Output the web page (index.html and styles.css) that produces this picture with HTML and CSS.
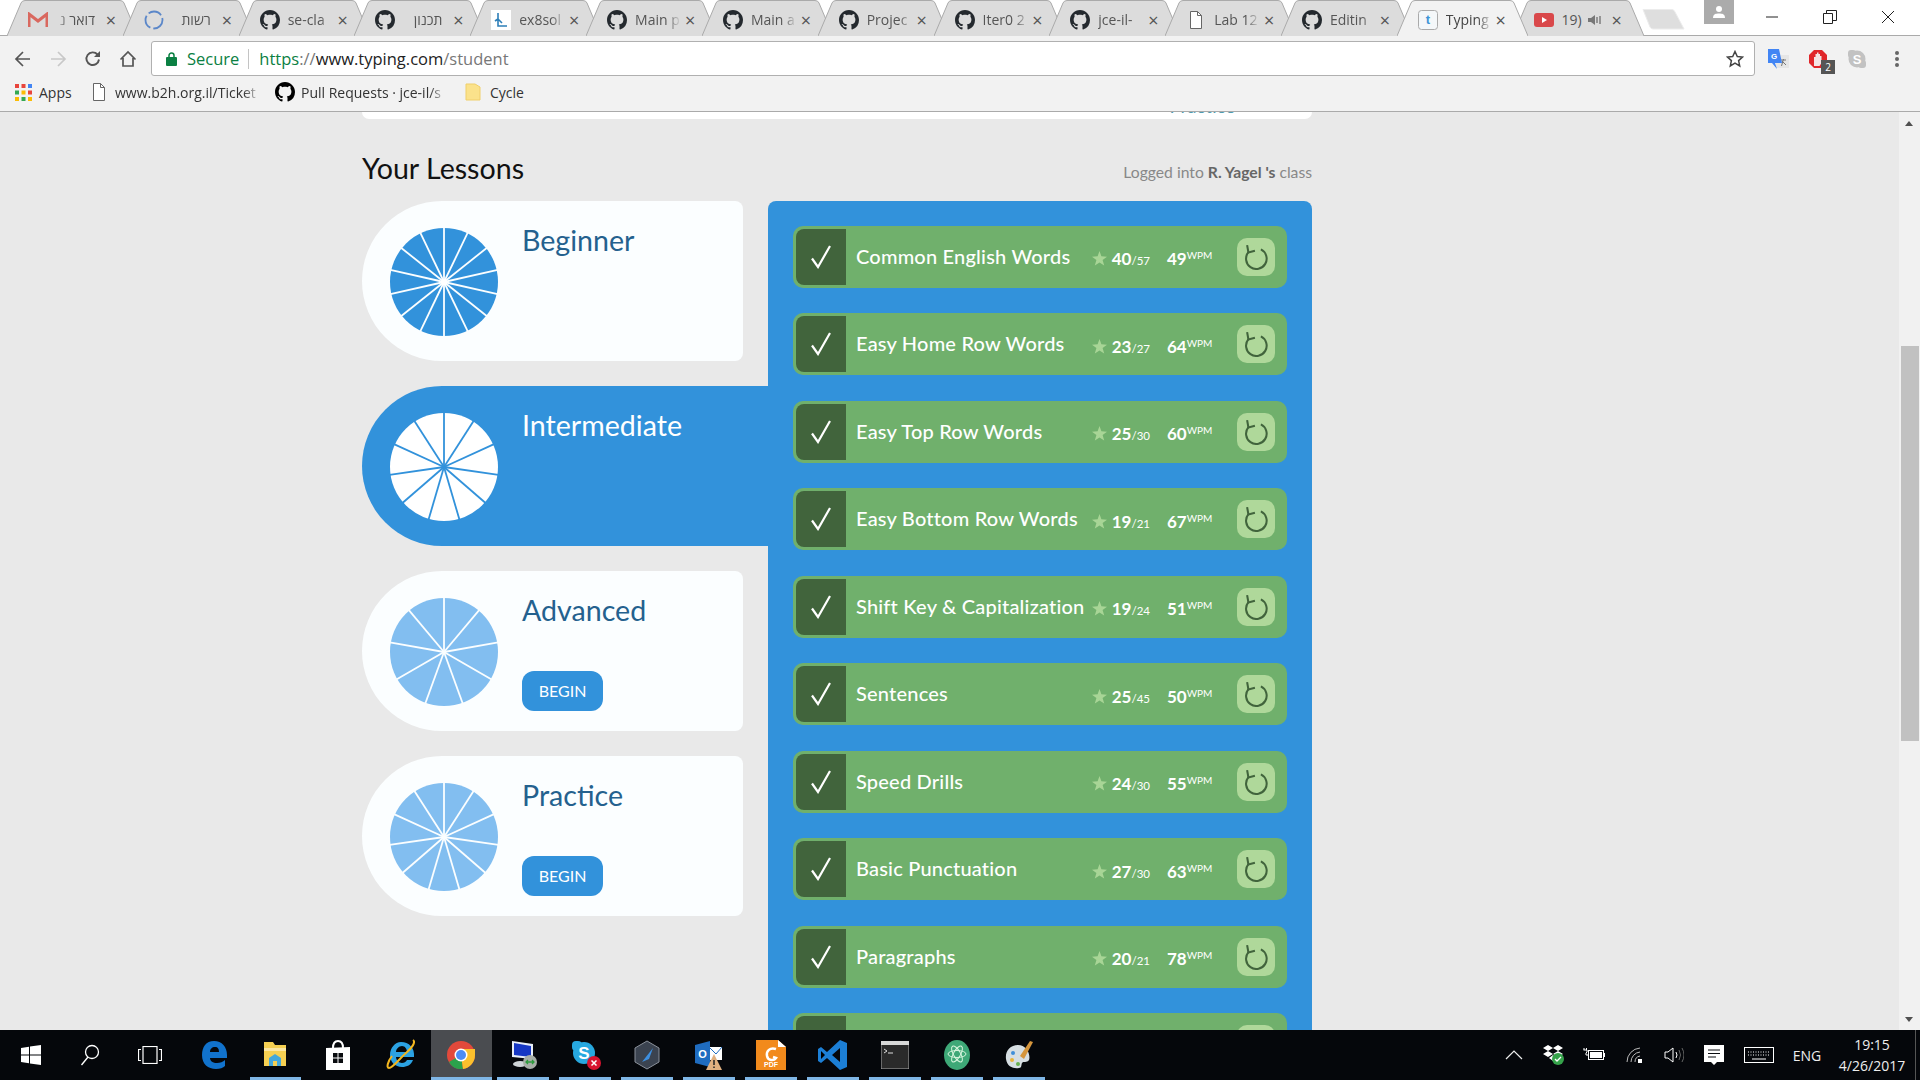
FILE: index.html
```html
<!DOCTYPE html>
<html lang="en">
<head>
<meta charset="utf-8">
<title>Typing.com</title>
<link rel="stylesheet" href="styles.css">
</head>
<body>
<svg class="defs" width="0" height="0" aria-hidden="true">
  <defs>
    <path id="gh" d="M8 0C3.58 0 0 3.58 0 8c0 3.54 2.29 6.53 5.47 7.59.4.07.55-.17.55-.38 0-.19-.01-.82-.01-1.49-2.01.37-2.53-.49-2.69-.94-.09-.23-.48-.94-.82-1.13-.28-.15-.68-.52-.01-.53.63-.01 1.08.58 1.23.82.72 1.21 1.87.87 2.33.66.07-.52.28-.87.51-1.07-1.78-.2-3.64-.89-3.64-3.95 0-.87.31-1.59.82-2.15-.08-.2-.36-1.02.08-2.12 0 0 .67-.21 2.2.82.64-.18 1.32-.27 2-.27s1.36.09 2 .27c1.53-1.04 2.2-.82 2.2-.82.44 1.1.16 1.92.08 2.12.51.56.82 1.27.82 2.15 0 3.07-1.87 3.75-3.65 3.95.29.25.54.73.54 1.48 0 1.07-.01 1.93-.01 2.2 0 .21.15.46.55.38A8.01 8.01 0 0 0 16 8c0-4.42-3.58-8-8-8z"/>
    <path id="tabshape" d="M0 36 L14 3 Q15 .5 18 .5 L113 .5 Q116 .5 117 3 L131 36"/>
    <g id="doc"><path d="M1.5.5h7l4 4v13h-11z" fill="#fff" stroke="#666"/><path d="M8.5.5v4h4" fill="none" stroke="#666"/></g>
    <g id="check"><path d="M2 13.500 L8 22 L20 1" fill="none" stroke="#fff" stroke-width="2.200"/></g>
    <g id="redo"><path d="M5 7.500A9.500 9.500 0 1 0 16.500 5" fill="none" stroke="#41643c" stroke-width="1.900"/><path d="M3.800 1 L5 7.800 L11 6.300" fill="none" stroke="#41643c" stroke-width="1.900"/></g>
    <polygon id="star" points="8,0 10,5.6 16,6 11.3,9.7 13,15.5 8,12.2 3,15.5 4.7,9.7 0,6 6,5.6" fill="#a8d596"/>
  </defs>
</svg>

<header class="chrome">
  <div class="tabstrip">
    <div class="tab">
      <svg class="tab-bg" width="131" height="36"><use href="#tabshape"/></svg>
      <svg class="fav" viewBox="0 0 20 16" width="20" height="16"><path d="M1 15V2l9 7 9-7v13" fill="none" stroke="#d9685f" stroke-width="3"/></svg>
      <span class="tab-text rtl">דואר נ</span><span class="tab-x">×</span>
    </div>
    <div class="tab">
      <svg class="tab-bg" width="131" height="36"><use href="#tabshape"/></svg>
      <svg class="fav" viewBox="0 0 20 20" width="20" height="20"><circle cx="10" cy="10" r="8.500" fill="none" stroke="#5b87c9" stroke-width="1.800" stroke-dasharray="14 3"/></svg>
      <span class="tab-text rtl">רשות</span><span class="tab-x">×</span>
    </div>
    <div class="tab">
      <svg class="tab-bg" width="131" height="36"><use href="#tabshape"/></svg>
      <svg class="fav" viewBox="0 0 16 16" width="20" height="20"><use href="#gh"/></svg>
      <span class="tab-text">se-cla</span><span class="tab-x">×</span>
    </div>
    <div class="tab">
      <svg class="tab-bg" width="131" height="36"><use href="#tabshape"/></svg>
      <svg class="fav" viewBox="0 0 16 16" width="20" height="20"><use href="#gh"/></svg>
      <span class="tab-text rtl">תכנון</span><span class="tab-x">×</span>
    </div>
    <div class="tab">
      <svg class="tab-bg" width="131" height="36"><use href="#tabshape"/></svg>
      <svg class="fav" viewBox="0 0 20 20" width="20" height="20"><rect width="20" height="20" fill="#fff"/><path d="M7 3v13h9M7 9l-3 2M7 9l4 4" fill="none" stroke="#2d7fb8" stroke-width="1.600"/></svg>
      <span class="tab-text">ex8sol</span><span class="tab-x">×</span>
    </div>
    <div class="tab">
      <svg class="tab-bg" width="131" height="36"><use href="#tabshape"/></svg>
      <svg class="fav" viewBox="0 0 16 16" width="20" height="20"><use href="#gh"/></svg>
      <span class="tab-text">Main p</span><span class="tab-x">×</span>
    </div>
    <div class="tab">
      <svg class="tab-bg" width="131" height="36"><use href="#tabshape"/></svg>
      <svg class="fav" viewBox="0 0 16 16" width="20" height="20"><use href="#gh"/></svg>
      <span class="tab-text">Main a</span><span class="tab-x">×</span>
    </div>
    <div class="tab">
      <svg class="tab-bg" width="131" height="36"><use href="#tabshape"/></svg>
      <svg class="fav" viewBox="0 0 16 16" width="20" height="20"><use href="#gh"/></svg>
      <span class="tab-text">Projec</span><span class="tab-x">×</span>
    </div>
    <div class="tab">
      <svg class="tab-bg" width="131" height="36"><use href="#tabshape"/></svg>
      <svg class="fav" viewBox="0 0 16 16" width="20" height="20"><use href="#gh"/></svg>
      <span class="tab-text">Iter0 2</span><span class="tab-x">×</span>
    </div>
    <div class="tab">
      <svg class="tab-bg" width="131" height="36"><use href="#tabshape"/></svg>
      <svg class="fav" viewBox="0 0 16 16" width="20" height="20"><use href="#gh"/></svg>
      <span class="tab-text">jce-il-</span><span class="tab-x">×</span>
    </div>
    <div class="tab">
      <svg class="tab-bg" width="131" height="36"><use href="#tabshape"/></svg>
      <svg class="fav" viewBox="-3 -1 20 20" width="20" height="20"><use href="#doc"/></svg>
      <span class="tab-text">Lab 12</span><span class="tab-x">×</span>
    </div>
    <div class="tab">
      <svg class="tab-bg" width="131" height="36"><use href="#tabshape"/></svg>
      <svg class="fav" viewBox="0 0 16 16" width="20" height="20"><use href="#gh"/></svg>
      <span class="tab-text">Editin</span><span class="tab-x">×</span>
    </div>
    <div class="tab tab-active">
      <svg class="tab-bg" width="131" height="36"><use href="#tabshape"/></svg>
      <svg class="fav" viewBox="0 0 20 20" width="20" height="20"><rect x=".5" y=".5" width="19" height="19" rx="3" fill="#f4f7f9" stroke="#aaa"/><text x="10" y="14" class="fav-t">t</text></svg>
      <span class="tab-text">Typing</span><span class="tab-x">×</span>
    </div>
    <div class="tab">
      <svg class="tab-bg" width="131" height="36"><use href="#tabshape"/></svg>
      <svg class="fav" viewBox="0 0 20 14" width="20" height="14"><rect width="20" height="14" rx="3" fill="#d9484a"/><path d="M8 4l5 3-5 3z" fill="#fff"/></svg>
      <span class="tab-text tab-text-short">19)</span>
      <svg class="speaker" viewBox="0 0 14 12" width="14" height="12"><path d="M0 4h3l4-3v10l-4-3H0z" fill="#777"/><path d="M9 3v6M12 2v8" stroke="#777" stroke-width="1.400"/></svg>
      <span class="tab-x">×</span>
    </div>
    <div class="newtab">
      <svg width="44" height="24" viewBox="0 0 44 24"><path d="M1 1.500 H30 Q32 1.500 33 4 L42 21 H11 Q9 21 8 19z" fill="#dedede" stroke="#ececec"/></svg>
    </div>
    <div class="profile">
      <svg viewBox="0 0 14 12" width="14" height="12"><circle cx="7" cy="3" r="3" fill="#fff"/><path d="M1 12c0-4 3-4.500 6-4.500s6 .5 6 4.500z" fill="#fff"/></svg>
    </div>
    <div class="winctl">
      <svg viewBox="0 0 14 14" width="14" height="14"><path d="M1 7h12" stroke="#222"/></svg>
      <svg viewBox="0 0 14 14" width="14" height="14"><path d="M.5 3.500h9v10h-9zM3.500 3.500v-3h10v10h-4" fill="none" stroke="#222"/></svg>
      <svg viewBox="0 0 14 14" width="14" height="14"><path d="M1 1l12 12M13 1L1 13" stroke="#222"/></svg>
    </div>
  </div>

  <div class="toolbar">
    <div class="nav-btns">
      <svg viewBox="0 0 18 18" width="18" height="18"><path d="M16 9H2M9 2L2 9l7 7" fill="none" stroke="#555" stroke-width="1.700"/></svg>
      <svg viewBox="0 0 18 18" width="18" height="18"><path d="M2 9h14M9 2l7 7-7 7" fill="none" stroke="#c8c8c8" stroke-width="1.700"/></svg>
      <svg viewBox="0 0 18 18" width="18" height="18"><path d="M15 9.500A6.300 6.300 0 1 1 13.500 4.500" fill="none" stroke="#555" stroke-width="1.900"/><path d="M16 1v6h-6z" fill="#555"/></svg>
      <svg viewBox="0 0 18 18" width="18" height="18"><path d="M1.500 9.500L9 2l7.500 7.500M4 8v8h10V8" fill="none" stroke="#555" stroke-width="1.700"/></svg>
    </div>
    <div class="omnibox">
      <svg class="lock" viewBox="0 0 12 14" width="12" height="14"><rect y="5" width="11" height="9" rx="1" fill="#0b8043"/><path d="M3 6V3.500a2.500 2.500 0 0 1 5 0V6" fill="none" stroke="#0b8043" stroke-width="1.500"/></svg>
      <span class="secure">Secure</span>
      <span class="omni-div"></span>
      <span class="url"><span class="url-green">https</span><span class="url-gray">://</span>www.typing.com<span class="url-gray">/student</span></span>
      <svg class="bm-star" viewBox="0 0 18 18" width="18" height="18"><path d="M9 1.500l2.300 5 5.200.6-3.900 3.500 1.100 5.300L9 13.200l-4.700 2.700 1.100-5.300L1.500 7.100l5.200-.6z" fill="none" stroke="#444" stroke-width="1.500"/></svg>
    </div>
    <div class="ext">
      <svg viewBox="0 0 22 20" width="22" height="20"><rect x="9" y="6" width="13" height="13" fill="#e6e6e6"/><path d="M14 11h5M16.500 10l-2 7M15 12l4 4" stroke="#777" fill="none"/><path d="M1 0h11l3 14H8l2 6-5-6H1z" fill="#4285f4"/><text x="4" y="10" class="ext-g">G</text></svg>
      <span class="ext-stop">
        <svg viewBox="0 0 20 20" width="20" height="20"><path d="M6 1h8l5 5v8l-5 5H6l-5-5V6z" fill="#e0262a"/><path d="M6 17V8h1.500v-3h1.500v-1.500h1.500V5h1.500v2h1.500v7l-2 3z" fill="#f4e4e4"/></svg>
        <span class="ext-badge">2</span>
      </span>
      <svg viewBox="0 0 20 20" width="20" height="20"><circle cx="10" cy="10" r="8.500" fill="#c2c2c2"/><rect x="1" y="1" width="8" height="8" rx="3" fill="#c2c2c2"/><rect x="11" y="11" width="8" height="8" rx="3" fill="#c2c2c2"/><text x="10" y="15" class="ext-s">S</text></svg>
      <svg class="ext-menu" viewBox="0 0 4 18" width="4" height="18"><circle cx="2" cy="3" r="2" fill="#666"/><circle cx="2" cy="9" r="2" fill="#666"/><circle cx="2" cy="15" r="2" fill="#666"/></svg>
    </div>
  </div>

  <div class="bookmarks">
    <div class="bm bm-apps">
      <svg viewBox="0 0 17 17" width="17" height="17">
        <rect width="4" height="4" fill="#e8453c"/><rect x="6.500" width="4" height="4" fill="#e8453c"/><rect x="13" width="4" height="4" fill="#4285f4"/>
        <rect y="6.500" width="4" height="4" fill="#34a853"/><rect x="6.500" y="6.500" width="4" height="4" fill="#fbbc05"/><rect x="13" y="6.500" width="4" height="4" fill="#e8453c"/>
        <rect y="13" width="4" height="4" fill="#fbbc05"/><rect x="6.500" y="13" width="4" height="4" fill="#34a853"/><rect x="13" y="13" width="4" height="4" fill="#fbbc05"/>
      </svg>
      <span>Apps</span>
    </div>
    <div class="bm bm-ticket">
      <svg viewBox="0 0 14 18" width="14" height="18"><use href="#doc"/></svg>
      <span class="bm-fade">www.b2h.org.il/Ticket</span>
    </div>
    <div class="bm bm-pull">
      <svg viewBox="0 0 16 16" width="20" height="20"><use href="#gh"/></svg>
      <span class="bm-fade">Pull Requests · jce-il/s</span>
    </div>
    <div class="bm bm-cycle">
      <svg viewBox="0 0 16 18" width="16" height="18"><path d="M1 1h9l5 3v13H1z" fill="#fbe28b" stroke="#f0cf6a"/></svg>
      <span>Cycle</span>
    </div>
  </div>
</header>

<div class="viewport">
  <main class="page">
    <div class="topcard"><span class="topcard-link">Practice</span></div>
    <div class="lessons-head">
      <h2 class="lessons-title">Your Lessons</h2>
      <p class="logged">Logged into <b>R. Yagel 's</b> class</p>
    </div>
    <div class="lessons">
      <nav class="levels">
        <section class="level">
          <svg class="pie pie-solid" viewBox="-55 -55 110 110" width="110" height="110">
            <circle r="54"/>
            <g class="spokes-white"><path d="M0 0V-55"/><path d="M0 0V-55" transform="rotate(25.71)"/><path d="M0 0V-55" transform="rotate(51.43)"/><path d="M0 0V-55" transform="rotate(77.14)"/><path d="M0 0V-55" transform="rotate(102.86)"/><path d="M0 0V-55" transform="rotate(128.57)"/><path d="M0 0V-55" transform="rotate(154.29)"/><path d="M0 0V-55" transform="rotate(180)"/><path d="M0 0V-55" transform="rotate(205.71)"/><path d="M0 0V-55" transform="rotate(231.43)"/><path d="M0 0V-55" transform="rotate(257.14)"/><path d="M0 0V-55" transform="rotate(282.86)"/><path d="M0 0V-55" transform="rotate(308.57)"/><path d="M0 0V-55" transform="rotate(334.29)"/></g>
            <circle class="hub" r="3"/>
          </svg>
          <div class="level-body"><h3 class="level-name">Beginner</h3></div>
        </section>
        <section class="level level-active">
          <svg class="pie pie-white" viewBox="-55 -55 110 110" width="110" height="110">
            <circle r="54"/>
            <g class="spokes-blue"><path d="M0 0V-55"/><path d="M0 0V-55" transform="rotate(32.73)"/><path d="M0 0V-55" transform="rotate(65.45)"/><path d="M0 0V-55" transform="rotate(98.18)"/><path d="M0 0V-55" transform="rotate(130.91)"/><path d="M0 0V-55" transform="rotate(163.64)"/><path d="M0 0V-55" transform="rotate(196.36)"/><path d="M0 0V-55" transform="rotate(229.09)"/><path d="M0 0V-55" transform="rotate(261.82)"/><path d="M0 0V-55" transform="rotate(294.55)"/><path d="M0 0V-55" transform="rotate(327.27)"/></g>
          </svg>
          <div class="level-body"><h3 class="level-name">Intermediate</h3></div>
        </section>
        <section class="level">
          <svg class="pie pie-light" viewBox="-55 -55 110 110" width="110" height="110">
            <circle r="54"/>
            <g class="spokes-white"><path d="M0 0V-55"/><path d="M0 0V-55" transform="rotate(40)"/><path d="M0 0V-55" transform="rotate(80)"/><path d="M0 0V-55" transform="rotate(120)"/><path d="M0 0V-55" transform="rotate(160)"/><path d="M0 0V-55" transform="rotate(200)"/><path d="M0 0V-55" transform="rotate(240)"/><path d="M0 0V-55" transform="rotate(280)"/><path d="M0 0V-55" transform="rotate(320)"/></g>
          </svg>
          <div class="level-body"><h3 class="level-name">Advanced</h3><a class="begin">BEGIN</a></div>
        </section>
        <section class="level">
          <svg class="pie pie-light" viewBox="-55 -55 110 110" width="110" height="110">
            <circle r="54"/>
            <g class="spokes-white"><path d="M0 0V-55"/><path d="M0 0V-55" transform="rotate(32.73)"/><path d="M0 0V-55" transform="rotate(65.45)"/><path d="M0 0V-55" transform="rotate(98.18)"/><path d="M0 0V-55" transform="rotate(130.91)"/><path d="M0 0V-55" transform="rotate(163.64)"/><path d="M0 0V-55" transform="rotate(196.36)"/><path d="M0 0V-55" transform="rotate(229.09)"/><path d="M0 0V-55" transform="rotate(261.82)"/><path d="M0 0V-55" transform="rotate(294.55)"/><path d="M0 0V-55" transform="rotate(327.27)"/></g>
          </svg>
          <div class="level-body"><h3 class="level-name">Practice</h3><a class="begin">BEGIN</a></div>
        </section>
      </nav>
      <div class="panel">
        <div class="row"><span class="row-check"><svg viewBox="0 0 22 24" width="22" height="24"><use href="#check"/></svg></span><span class="row-title">Common English Words</span><span class="row-stars"><svg viewBox="0 0 16 16" width="15" height="15"><use href="#star"/></svg><b>40</b><small>/57</small></span><span class="row-wpm"><b>49</b><sup>WPM</sup></span><span class="row-redo"><svg viewBox="0 0 24 24" width="26" height="26"><use href="#redo"/></svg></span></div>
        <div class="row"><span class="row-check"><svg viewBox="0 0 22 24" width="22" height="24"><use href="#check"/></svg></span><span class="row-title">Easy Home Row Words</span><span class="row-stars"><svg viewBox="0 0 16 16" width="15" height="15"><use href="#star"/></svg><b>23</b><small>/27</small></span><span class="row-wpm"><b>64</b><sup>WPM</sup></span><span class="row-redo"><svg viewBox="0 0 24 24" width="26" height="26"><use href="#redo"/></svg></span></div>
        <div class="row"><span class="row-check"><svg viewBox="0 0 22 24" width="22" height="24"><use href="#check"/></svg></span><span class="row-title">Easy Top Row Words</span><span class="row-stars"><svg viewBox="0 0 16 16" width="15" height="15"><use href="#star"/></svg><b>25</b><small>/30</small></span><span class="row-wpm"><b>60</b><sup>WPM</sup></span><span class="row-redo"><svg viewBox="0 0 24 24" width="26" height="26"><use href="#redo"/></svg></span></div>
        <div class="row"><span class="row-check"><svg viewBox="0 0 22 24" width="22" height="24"><use href="#check"/></svg></span><span class="row-title">Easy Bottom Row Words</span><span class="row-stars"><svg viewBox="0 0 16 16" width="15" height="15"><use href="#star"/></svg><b>19</b><small>/21</small></span><span class="row-wpm"><b>67</b><sup>WPM</sup></span><span class="row-redo"><svg viewBox="0 0 24 24" width="26" height="26"><use href="#redo"/></svg></span></div>
        <div class="row"><span class="row-check"><svg viewBox="0 0 22 24" width="22" height="24"><use href="#check"/></svg></span><span class="row-title">Shift Key &amp; Capitalization</span><span class="row-stars"><svg viewBox="0 0 16 16" width="15" height="15"><use href="#star"/></svg><b>19</b><small>/24</small></span><span class="row-wpm"><b>51</b><sup>WPM</sup></span><span class="row-redo"><svg viewBox="0 0 24 24" width="26" height="26"><use href="#redo"/></svg></span></div>
        <div class="row"><span class="row-check"><svg viewBox="0 0 22 24" width="22" height="24"><use href="#check"/></svg></span><span class="row-title">Sentences</span><span class="row-stars"><svg viewBox="0 0 16 16" width="15" height="15"><use href="#star"/></svg><b>25</b><small>/45</small></span><span class="row-wpm"><b>50</b><sup>WPM</sup></span><span class="row-redo"><svg viewBox="0 0 24 24" width="26" height="26"><use href="#redo"/></svg></span></div>
        <div class="row"><span class="row-check"><svg viewBox="0 0 22 24" width="22" height="24"><use href="#check"/></svg></span><span class="row-title">Speed Drills</span><span class="row-stars"><svg viewBox="0 0 16 16" width="15" height="15"><use href="#star"/></svg><b>24</b><small>/30</small></span><span class="row-wpm"><b>55</b><sup>WPM</sup></span><span class="row-redo"><svg viewBox="0 0 24 24" width="26" height="26"><use href="#redo"/></svg></span></div>
        <div class="row"><span class="row-check"><svg viewBox="0 0 22 24" width="22" height="24"><use href="#check"/></svg></span><span class="row-title">Basic Punctuation</span><span class="row-stars"><svg viewBox="0 0 16 16" width="15" height="15"><use href="#star"/></svg><b>27</b><small>/30</small></span><span class="row-wpm"><b>63</b><sup>WPM</sup></span><span class="row-redo"><svg viewBox="0 0 24 24" width="26" height="26"><use href="#redo"/></svg></span></div>
        <div class="row"><span class="row-check"><svg viewBox="0 0 22 24" width="22" height="24"><use href="#check"/></svg></span><span class="row-title">Paragraphs</span><span class="row-stars"><svg viewBox="0 0 16 16" width="15" height="15"><use href="#star"/></svg><b>20</b><small>/21</small></span><span class="row-wpm"><b>78</b><sup>WPM</sup></span><span class="row-redo"><svg viewBox="0 0 24 24" width="26" height="26"><use href="#redo"/></svg></span></div>
        <div class="row"><span class="row-check"></span><span class="row-title"></span><span class="row-redo"></span></div>
      </div>
    </div>
  </main>
  <aside class="scrollbar">
    <span class="sb-up"></span>
    <span class="sb-thumb"></span>
    <span class="sb-down"></span>
  </aside>
</div>

<footer class="taskbar">
  <div class="tb-item"><svg viewBox="0 0 20 20" width="20" height="20"><path d="M0 3l8-1.200v7.700H0zM9 1.600L20 0v9.500H9zM0 10.500h8v7.700L0 17zM9 10.500h11V20L9 18.400z" fill="#fff"/></svg></div>
  <div class="tb-item"><svg viewBox="0 0 20 22" width="20" height="22"><circle cx="12" cy="8" r="6.500" fill="none" stroke="#fff" stroke-width="1.300"/><path d="M8 13L1.500 21" stroke="#fff" stroke-width="1.300"/></svg></div>
  <div class="tb-item"><svg viewBox="0 0 24 18" width="24" height="18"><rect x="5" y=".5" width="14" height="17" fill="none" stroke="#fff" stroke-width="1.200"/><path d="M3 3.500H.5v11H3M21 3.500h2.500v11H21" fill="none" stroke="#fff" stroke-width="1.200"/></svg></div>
  <div class="tb-item"><svg viewBox="0 0 26 28" width="26" height="28"><path d="M13 0C5 0 1 6 1 14c0 9 6 14 14 14 4 0 7-1 9-3v-6c-2 2-5 3-8 3-4 0-7-2-7-5h17v-3C26 6 21 0 13 0zM9 11c0-3 2-5 5-5s4 2 4 5z" fill="#1172cc"/></svg></div>
  <div class="tb-item tb-run"><svg viewBox="0 0 24 26" width="24" height="26"><path d="M1 0h9l2 3h11v21H1z" fill="#f5cf52"/><path d="M1 6h22v3H1z" fill="#fbe6a2"/><path d="M6 24v-8l6-4 6 4v8z" fill="#43a7dc"/><rect x="10" y="19" width="4" height="5" fill="#f5cf52"/></svg></div>
  <div class="tb-item"><svg viewBox="0 0 26 30" width="26" height="30"><path d="M1 8l24-1v23H1z" fill="#fff"/><path d="M8 8c0-5 2-7 5-7s5 2 5 7" fill="none" stroke="#fff" stroke-width="2"/><path d="M8 13h4.500v4.500H8zM13.500 13H18v4.500h-4.500zM8 18.500h4.500V23H8zM13.500 18.500H18V23h-4.500z" fill="#0a0c10"/></svg></div>
  <div class="tb-item"><svg viewBox="-2 0 30 32" width="30" height="32"><path d="M14 3C8 3 3 9 3 16s5 12 12 12c5 0 9-2 11-7h-6c-1 2-3 3-5 3-3 0-6-3-6-6h18c1-9-5-15-13-15zM9 13c0-3 3-6 6-6s5 3 5 6z" fill="#2ba1e2"/><path d="M26 1c3 2-1 8-7 13S6 29 2 29c-3 0-1-7 3-12" fill="none" stroke="#f3b61f" stroke-width="2"/></svg></div>
  <div class="tb-item tb-run tb-active"><svg viewBox="0 0 28 28" width="28" height="28"><circle cx="14" cy="14" r="14" fill="#e2493b"/><path d="M14 14L2 21a14 14 0 0 0 14 7z" fill="#2ba24c"/><path d="M14 14l2 14A14 14 0 0 0 28 14V8H14z" fill="#fbc02d"/><circle cx="14" cy="14" r="6.500" fill="#fff"/><circle cx="14" cy="14" r="5" fill="#4c8bf5"/></svg></div>
  <div class="tb-item tb-run"><svg viewBox="0 0 28 30" width="28" height="30"><path d="M3 1l21 3v15L3 17z" fill="#e8eef8"/><path d="M5 3l17 3v11L5 15z" fill="#1637c4"/><ellipse cx="11" cy="24" rx="7" ry="3" fill="#cfd4d8"/><circle cx="21" cy="22" r="7" fill="#a7ada7"/><path d="M17 22h8M19 20l-2 2 2 2M23 20l2 2-2 2" fill="none" stroke="#2d9a3d" stroke-width="1.300"/></svg></div>
  <div class="tb-item tb-run"><svg viewBox="-2 0 32 30" width="32" height="30"><circle cx="13" cy="13" r="11" fill="#27a8e0"/><rect x="1" y="1" width="10" height="10" rx="4" fill="#27a8e0"/><text x="13" y="19" class="tb-s">S</text><circle cx="23" cy="23" r="7" fill="#d8132f"/><path d="M20.500 20.500l5 5M25.500 20.500l-5 5" stroke="#fff" stroke-width="1.500"/></svg></div>
  <div class="tb-item tb-run"><svg viewBox="0 0 26 30" width="26" height="30"><path d="M13 1l12 7v14l-12 7L1 22V8z" fill="#3b4350" stroke="#8b919b"/><path d="M8 22L19 8l-4 11z" fill="#3d8fe0"/></svg></div>
  <div class="tb-item tb-run"><svg viewBox="0 0 28 30" width="28" height="30"><rect x="14" y="7" width="13" height="13" fill="#fff"/><path d="M14 7l7 7 6-7" fill="none" stroke="#1f6cc0"/><path d="M0 5L15 1v26L0 23z" fill="#1f6cc0"/><text x="7.500" y="18" class="tb-o">O</text><path d="M19 14l8 16H11z" fill="#e0b080"/><path d="M19 20v5M19 26.500v1.500" stroke="#222" stroke-width="1.500"/></svg></div>
  <div class="tb-item tb-run"><svg viewBox="0 0 30 30" width="30" height="30"><path d="M0 0h22l8 7v23H0z" fill="#f28a1c"/><path d="M22 0v7h8z" fill="#fff"/><path d="M20 9c-6-2-10 2-9 7s7 5 9 2l-3-1" fill="none" stroke="#fff" stroke-width="2.500"/><text x="15" y="27" class="tb-pdf">PDF</text></svg></div>
  <div class="tb-item tb-run"><svg viewBox="0 0 30 30" width="30" height="30"><path d="M22 0l7 3v24l-7 3L9 18l-6 5-3-2v-12l3-2 6 5zM22 8l-8 7 8 7z" fill="#1c7fd6" fill-rule="evenodd"/><path d="M3 11v8l4-4z" fill="#000"/></svg></div>
  <div class="tb-item tb-run"><svg viewBox="0 0 28 28" width="28" height="28"><rect width="28" height="28" fill="#2a2a2a" stroke="#aaa"/><rect width="28" height="4" fill="#d8d8d8"/><path d="M3 8l3 2-3 2M7 12h5" stroke="#ddd" fill="none"/></svg></div>
  <div class="tb-item tb-run"><svg viewBox="0 0 28 30" width="28" height="30"><ellipse cx="14" cy="15" rx="13" ry="15" fill="#3ea877"/><g fill="none" stroke="#d7f5dd" stroke-width="1"><ellipse cx="14" cy="14" rx="9" ry="3.500"/><ellipse cx="14" cy="14" rx="9" ry="3.500" transform="rotate(60 14 14)"/><ellipse cx="14" cy="14" rx="9" ry="3.500" transform="rotate(120 14 14)"/></g></svg></div>
  <div class="tb-item tb-run"><svg viewBox="0 0 30 30" width="30" height="30"><path d="M14 5C6 5 1 11 2 19s8 10 13 9c3 0 2-3 3-5s5 0 7-3c2-6-3-15-11-15z" fill="#d6dee2"/><circle cx="9" cy="13" r="2" fill="#3f8ed8"/><circle cx="8" cy="20" r="2" fill="#e7b43a"/><circle cx="14" cy="24" r="2" fill="#67b04f"/><path d="M16 16L26 1l3 1-9 17z" fill="#d5953c"/></svg></div>
  <div class="tray">
    <div class="tray-i"><svg viewBox="0 0 18 10" width="18" height="10"><path d="M1 9l8-8 8 8" fill="none" stroke="#eee" stroke-width="1.200"/></svg></div>
    <div class="tray-i"><svg viewBox="0 0 22 22" width="22" height="22"><path d="M5 1l5 3-5 3-5-3zM15 1l5 3-5 3-5-3zM5 7l5 3-5 3-5-3zM15 7l5 3-5 3-5-3zM10 11l4 3-4 3-4-3z" fill="#fff"/><circle cx="15" cy="15" r="6" fill="#35a24a"/><path d="M12 15l2 2 4-4" fill="none" stroke="#fff" stroke-width="1.300"/></svg></div>
    <div class="tray-i"><svg viewBox="0 0 22 14" width="22" height="14"><rect x="5.500" y="2.500" width="15" height="9" fill="none" stroke="#fff"/><rect x="7" y="4" width="12" height="6" fill="#fff"/><rect x="21" y="5" width="1" height="4" fill="#fff"/><path d="M1 0v2M3.500 0v2M.5 2h3.500v2l-1 1v2h2" fill="none" stroke="#fff"/></svg></div>
    <div class="tray-i"><svg viewBox="0 0 16 16" width="16" height="16"><path d="M1 15A14 14 0 0 1 14 1M5 15a10 10 0 0 1 9-10M9 15a6 6 0 0 1 5-6" fill="none" stroke="#bbb"/><rect x="12" y="12" width="4" height="4" fill="#fff"/></svg></div>
    <div class="tray-i"><svg viewBox="0 0 20 16" width="20" height="16"><path d="M1 5h3l5-4v14l-5-4H1z" fill="none" stroke="#fff"/><path d="M12 5q2 3 0 6" fill="none" stroke="#fff"/><path d="M15 3q3 5 0 10M18 1q4 7 0 14" fill="none" stroke="#666"/></svg></div>
    <div class="tray-i"><svg viewBox="0 0 20 20" width="20" height="20"><path d="M0 0h20v17h-7l-3 3-3-3H0z" fill="#fff"/><path d="M4 5h12M4 8.500h12M4 12h8" stroke="#0a0c10" stroke-width="1.200"/></svg></div>
    <div class="tray-i tray-kb"><svg viewBox="0 0 30 16" width="30" height="16"><rect x=".5" y=".5" width="29" height="15" fill="none" stroke="#fff"/><path d="M4 5h22M4 8h22" stroke="#fff" stroke-dasharray="1 1.500"/><path d="M8 12h14" stroke="#fff"/></svg></div>
    <div class="tray-i tray-eng">ENG</div>
    <div class="tray-clock"><span>19:15</span><span>4/26/2017</span></div>
    <div class="tray-end"></div>
  </div>
</footer>
</body>
</html>
```
FILE: styles.css
```css
* { box-sizing: border-box; }
html, body { margin: 0; height: 100%; }
body {
  display: flex;
  flex-direction: column;
  height: 100vh;
  overflow: hidden;
  font-family: "Lato", "Open Sans", sans-serif;
  background: #e9e9e9;
}
.defs { display: block; height: 0; }

/* browser chrome */
.chrome { flex: none; height: 112px; background: #f2f2f2; font-family: "Open Sans", "Liberation Sans", sans-serif; }
.tabstrip {
  display: flex;
  height: 36px;
  padding-left: 7px;
  background: #fff;
  border-bottom: 1px solid #aaa;
}
.tab {
  position: relative;
  flex: none;
  display: flex;
  align-items: center;
  width: 131px;
  height: 36px;
  margin-right: -15.2px;
  padding: 3px 0 0 21px;
  color: #555;
}
.tab-bg { position: absolute; left: 0; top: 0; fill: #dcdcdc; stroke: #aaa; stroke-width: 1; }
.tab > :not(.tab-bg) { position: relative; }
.tab-active { z-index: 2; color: #444; }
.tab-active .tab-bg { fill: #f2f2f2; }
.fav { flex: none; width: 20px; margin-right: 8px; fill: #24292e; }
.fav-t { font: 700 13px "Liberation Sans", sans-serif; fill: #3d94d6; text-anchor: middle; }
.tab-text {
  flex: none;
  width: 46px;
  overflow: hidden;
  white-space: nowrap;
  font-size: 14px;
  -webkit-mask-image: linear-gradient(to right, #000 70%, transparent 100%);
  mask-image: linear-gradient(to right, #000 70%, transparent 100%);
}
.tab-text.rtl {
  width: 39px;
  margin-right: 7px;
  direction: rtl;
  -webkit-mask-image: linear-gradient(to left, #000 70%, transparent 100%);
  mask-image: linear-gradient(to left, #000 70%, transparent 100%);
}
.tab-text-short { width: 26px; -webkit-mask-image: none; mask-image: none; }
.speaker { flex: none; width: 14px; margin-right: 6px; fill: none; }
.tab-x { flex: none; width: 14px; margin-left: 2px; text-align: center; font-size: 18px; line-height: 18px; color: #555; }
.newtab { flex: none; margin: 8px 0 0 14px; height: 24px; }
.profile {
  flex: none;
  display: flex;
  justify-content: center;
  align-items: center;
  width: 30px;
  height: 24px;
  margin-left: 18px;
  background: #ababab;
}
.winctl { flex: none; display: flex; gap: 44px; margin-left: 31px; padding-top: 10px; }

.toolbar { display: flex; height: 41px; padding-top: 5px; }
.nav-btns { flex: none; display: flex; align-items: center; gap: 17px; width: 151px; height: 35px; padding-left: 14px; }
.omnibox {
  flex: none;
  display: flex;
  align-items: center;
  width: 1604px;
  height: 35px;
  padding: 0 10px 0 12px;
  background: #fff;
  border: 1px solid #b0b0b0;
  border-radius: 3px;
  font-size: 16.5px;
}
.lock { flex: none; margin-right: 9px; margin-left: 2px; }
.secure { flex: none; color: #0b8043; }
.omni-div { flex: none; width: 1px; height: 20px; margin: 0 10px 0 9px; background: #c4c4c4; }
.url { flex: 1; color: #222; white-space: nowrap; }
.url-green { color: #0b8043; }
.url-gray { color: #777; }
.ext { flex: none; display: flex; align-items: center; gap: 19px; height: 35px; padding-left: 12px; }
.ext-menu { margin-left: 9px; }
.ext-g { font: 700 8px "Liberation Sans", sans-serif; fill: #fff; }
.ext-stop { position: relative; display: block; height: 20px; width: 20px; }
.ext-badge {
  position: absolute;
  left: 13px;
  top: 11px;
  width: 14px;
  height: 14px;
  background: #555;
  color: #fff;
  font-size: 10px;
  line-height: 14px;
  text-align: center;
}
.ext-s { font: 700 13px "Liberation Sans", sans-serif; fill: #fff; text-anchor: middle; }

.bookmarks {
  display: flex;
  align-items: center;
  height: 35px;
  padding-bottom: 4px;
  border-bottom: 1px solid #aaa;
  font-size: 14px;
  color: #333;
}
.bm { flex: none; display: flex; align-items: center; }
.bm span { white-space: nowrap; }
.bm-apps { width: 92px; padding-left: 15px; gap: 7px; }
.bm-ticket { width: 183px; gap: 9px; }
.bm-pull { width: 190px; gap: 6px; }
.bm-cycle { gap: 9px; }
.bm-fade {
  display: block;
  width: 146px;
  overflow: hidden;
  -webkit-mask-image: linear-gradient(to right, #000 88%, transparent 100%);
  mask-image: linear-gradient(to right, #000 88%, transparent 100%);
}

/* page */
.viewport { flex: 1; display: flex; min-height: 0; }
.page { flex: 1; min-width: 0; overflow: hidden; padding-left: 362px; }
.topcard {
  display: flex;
  justify-content: flex-end;
  width: 950px;
  height: 7px;
  padding-right: 77px;
  background: #fff;
  border-radius: 0 0 8px 8px;
  overflow: hidden;
}
.topcard-link { margin-top: -17px; font-size: 18.5px; line-height: 22px; height: 22px; color: #4f9bb0; }
.lessons-head {
  display: flex;
  justify-content: space-between;
  align-items: center;
  width: 950px;
  height: 82px;
  padding-top: 33px;
  padding-bottom: 18px;
}
.lessons-title { margin: 0; font-size: 28.6px; font-weight: 400; color: #111; }
.logged { margin: 9px 0 0; font-size: 15.7px; color: #888; }
.logged b { color: #666; }
.lessons { display: flex; width: 950px; align-items: flex-start; }
.levels { flex: none; display: flex; flex-direction: column; gap: 25px; width: 406px; }
.level {
  display: flex;
  width: 381px;
  height: 160px;
  padding: 0 0 0 26.500px;
  background: #fbfeff;
  border-radius: 80px 8px 8px 80px;
}
.level-active { width: 406px; background: #3292db; border-radius: 80px 0 0 80px; }
.pie { flex: none; margin-top: 26px; margin-right: 23.500px; }
.pie path { stroke-width: 1.800; }
.pie-solid circle { fill: #3292db; }
.pie-light circle { fill: #82bef0; }
.pie-white circle { fill: #fff; }
.spokes-white path { stroke: #fbfeff; }
.spokes-blue path { stroke: #3292db; }
.pie .hub { fill: #fff; }
.level-body { display: flex; flex-direction: column; align-items: flex-start; flex: 1; padding: 20px 0 20px; }
.level-name { margin: 0; font-size: 28.6px; line-height: 38px; font-weight: 400; color: #24618e; }
.level-active .level-name { color: #fff; }
.begin {
  margin-top: auto;
  width: 81px;
  height: 40px;
  background: #3292db;
  border-radius: 12px;
  color: #fff;
  font-size: 16px;
  line-height: 40px;
  text-align: center;
}
.panel {
  flex: none;
  width: 544px;
  padding: 24.7px 25px 25px;
  background: #3292db;
  border-radius: 8px 8px 0 0;
}
.row {
  display: flex;
  align-items: center;
  height: 62px;
  margin-bottom: 25.5px;
  padding: 3px 12px 3px 3px;
  background: #70b06c;
  border-radius: 10px;
  color: #fff;
}
.row-check {
  flex: none;
  display: flex;
  justify-content: center;
  align-items: center;
  align-self: stretch;
  width: 50px;
  background: #41643c;
  border-radius: 8px 0 0 8px;
}
.row-title {
  flex: 1;
  padding: 0 0 2px 10px;
  font-size: 20px;
  font-weight: 500;
  letter-spacing: .2px;
  white-space: nowrap;
}
.row-stars { flex: none; display: flex; align-items: baseline; justify-content: flex-end; margin-right: 17px; padding-top: 4px; }
.row-stars svg { align-self: center; margin-right: 5px; }
.row-stars b, .row-wpm b { font-size: 17px; font-weight: 700; }
.row-stars small { font-size: 11.5px; }
.row-wpm { flex: none; display: flex; align-items: flex-start; width: 46px; margin-right: 24px; padding-top: 4px; }
.row-wpm sup { font-size: 10px; line-height: 14px; font-weight: 400; vertical-align: baseline; }
.row-redo {
  flex: none;
  display: flex;
  justify-content: center;
  align-items: center;
  width: 38px;
  height: 38px;
  background: #afd89a;
  border-radius: 10px;
}

/* scrollbar */
.scrollbar {
  position: relative;
  flex: none;
  display: flex;
  flex-direction: column;
  width: 21px;
  padding: 234px 1px 0 2px;
  background: #f1f1f1;
}
.sb-thumb { display: block; height: 395px; background: #c1c1c1; }
.sb-up, .sb-down {
  position: absolute;
  left: 6px;
  width: 0;
  height: 0;
  border-left: 4px solid transparent;
  border-right: 4px solid transparent;
}
.sb-up { top: 9px; border-bottom: 5px solid #505050; }
.sb-down { bottom: 8px; border-top: 5px solid #505050; }

/* taskbar */
.taskbar { flex: none; display: flex; height: 50px; background: #05070b; color: #eee; font-family: "Open Sans", sans-serif; }
.tb-item {
  position: relative;
  flex: none;
  display: flex;
  justify-content: center;
  align-items: center;
  width: 62px;
  height: 50px;
}
.tb-item:nth-child(1) { width: 61.5px; }
.tb-item:nth-child(2) { width: 56px; }
.tb-item:nth-child(3) { width: 65.5px; }
.tb-item:nth-child(4) { width: 61.5px; }
.tb-item:nth-child(5) { width: 61.5px; }
.tb-item:nth-child(6) { width: 63px; }
.tb-item:nth-child(7) { width: 61.5px; }
.tb-item:nth-child(8) { width: 61.5px; }
.tb-run::after {
  content: "";
  position: absolute;
  left: 5px;
  right: 5px;
  bottom: 0;
  height: 3px;
  background: #7fb6e6;
}
.tb-active { background: #4a4c50; }
.tb-active::after { left: 0; right: 0; }
.tb-s { font: 700 17px "Liberation Sans", sans-serif; fill: #fff; text-anchor: middle; }
.tb-o { font: 700 11px "Liberation Sans", sans-serif; fill: #fff; text-anchor: middle; }
.tb-pdf { font: 700 7px "Liberation Sans", sans-serif; fill: #fff; text-anchor: middle; }
.tray { margin-left: auto; display: flex; }
.tray-i { flex: none; display: flex; justify-content: center; align-items: center; width: 40px; height: 50px; }
.tray-kb { width: 50px; }
.tray-eng { width: 46px; font-size: 14px; }
.tray-clock {
  flex: none;
  display: flex;
  flex-direction: column;
  justify-content: center;
  align-items: center;
  width: 84px;
  font-size: 14px;
  line-height: 21px;
}
.tray-end { flex: none; width: 5px; border-left: 1px solid #555; margin-left: 1px; }
```
